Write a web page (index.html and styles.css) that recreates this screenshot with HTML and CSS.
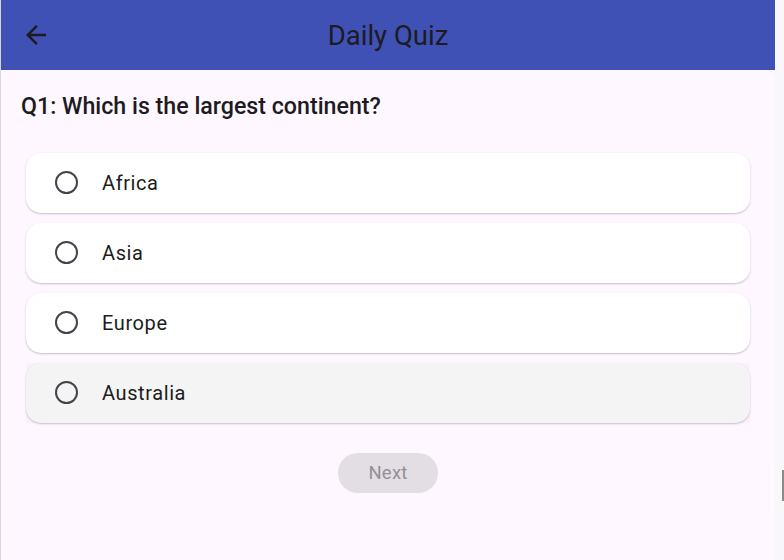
FILE: index.html
```html
<!DOCTYPE html>
<html>
<head>
<meta charset="utf-8">
<link rel="stylesheet" href="styles.css">
</head>
<body>
<div class="frame">
  <div class="app">
    <header class="appbar">
      <button class="back" aria-label="Back">
        <svg viewBox="0 0 24 24" width="30" height="30"><path d="M20 11H7.83l5.59-5.59L12 4l-8 8 8 8 1.41-1.41L7.83 13H20v-2z" fill="#1d1b20"/></svg>
      </button>
      <h1 class="title">Daily Quiz</h1>
    </header>
    <main class="content">
      <h2 class="question">Q1: Which is the largest continent?</h2>
      <div class="options">
        <div class="option"><span class="radio"></span><span class="label">Africa</span></div>
        <div class="option"><span class="radio"></span><span class="label">Asia</span></div>
        <div class="option"><span class="radio"></span><span class="label">Europe</span></div>
        <div class="option-wrap"><div class="option hover"><span class="radio"></span><span class="label">Australia</span></div></div>
      </div>
      <div class="actions"><button class="next" disabled>Next</button></div>
    </main>
  </div>
  <div class="side"><span class="grip"></span></div>
</div>
</body>
</html>
```
FILE: styles.css
```css
* { box-sizing: border-box; }
html, body { margin: 0; padding: 0; }
body {
  width: 784px;
  height: 560px;
  overflow: hidden;
  font-family: Roboto, "Noto Sans", sans-serif;
  color: #1d1b20;
  background: #f8f8fc;
}
.frame {
  display: flex;
  height: 560px;
  border-left: 1px solid #d6d4dc;
}
.app {
  width: 774px;
  height: 560px;
  background: #fef7ff;
  display: flex;
  flex-direction: column;
}
.side {
  flex: 1;
  position: relative;
  background: #f8f8fc;
}
.grip {
  position: absolute;
  right: 0;
  top: 470px;
  width: 2px;
  height: 31px;
  background: #8a8a8a;
}
.appbar {
  height: 70px;
  background: #3f51b5;
  display: flex;
  align-items: center;
  position: relative;
}
.back {
  margin-left: 20px;
  width: 30px;
  height: 30px;
  padding: 0;
  border: 0;
  background: transparent;
  display: flex;
}
.title {
  position: absolute;
  left: 0;
  right: 0;
  text-align: center;
  margin: 0;
  font-size: 27.5px;
  font-weight: 400;
  color: #1d1b20;
  pointer-events: none;
}
.content {
  padding: 21px 20px 0 20px;
}
.question {
  margin: 0;
  font-size: 23.2px;
  font-weight: 500;
  line-height: 30px;
  letter-spacing: 0;
}
.options {
  margin-top: 27px;
  display: flex;
  flex-direction: column;
}
.option {
  margin: 5px;
  height: 60px;
  border-radius: 15px;
  background: #ffffff;
  box-shadow: 0 1px 2px rgba(60, 40, 70, 0.28);
  display: flex;
  align-items: center;
  padding-left: 29px;
}
.option-wrap {
  margin: 5px;
  background: #fbf1fb;
}
.option-wrap .option { margin: 0; }
.option.hover { background: #f4f4f4; }
.radio {
  width: 23px;
  height: 23px;
  border: 2.7px solid #46424c;
  border-radius: 50%;
  flex: none;
  margin-top: -1px;
}
.label {
  margin-left: 24px;
  font-size: 20px;
  letter-spacing: 0.6px;
  color: #1d1b20;
  margin-top: -1px;
}
.actions {
  display: flex;
  justify-content: center;
  margin-top: 25px;
}
.next {
  width: 100px;
  height: 40px;
  border: 0;
  border-radius: 20px;
  background: #e3dde4;
  color: #938f96;
  font-family: Roboto, "Noto Sans", sans-serif;
  font-size: 18.5px;
  font-weight: 400;
  letter-spacing: 0.2px;
}
```
